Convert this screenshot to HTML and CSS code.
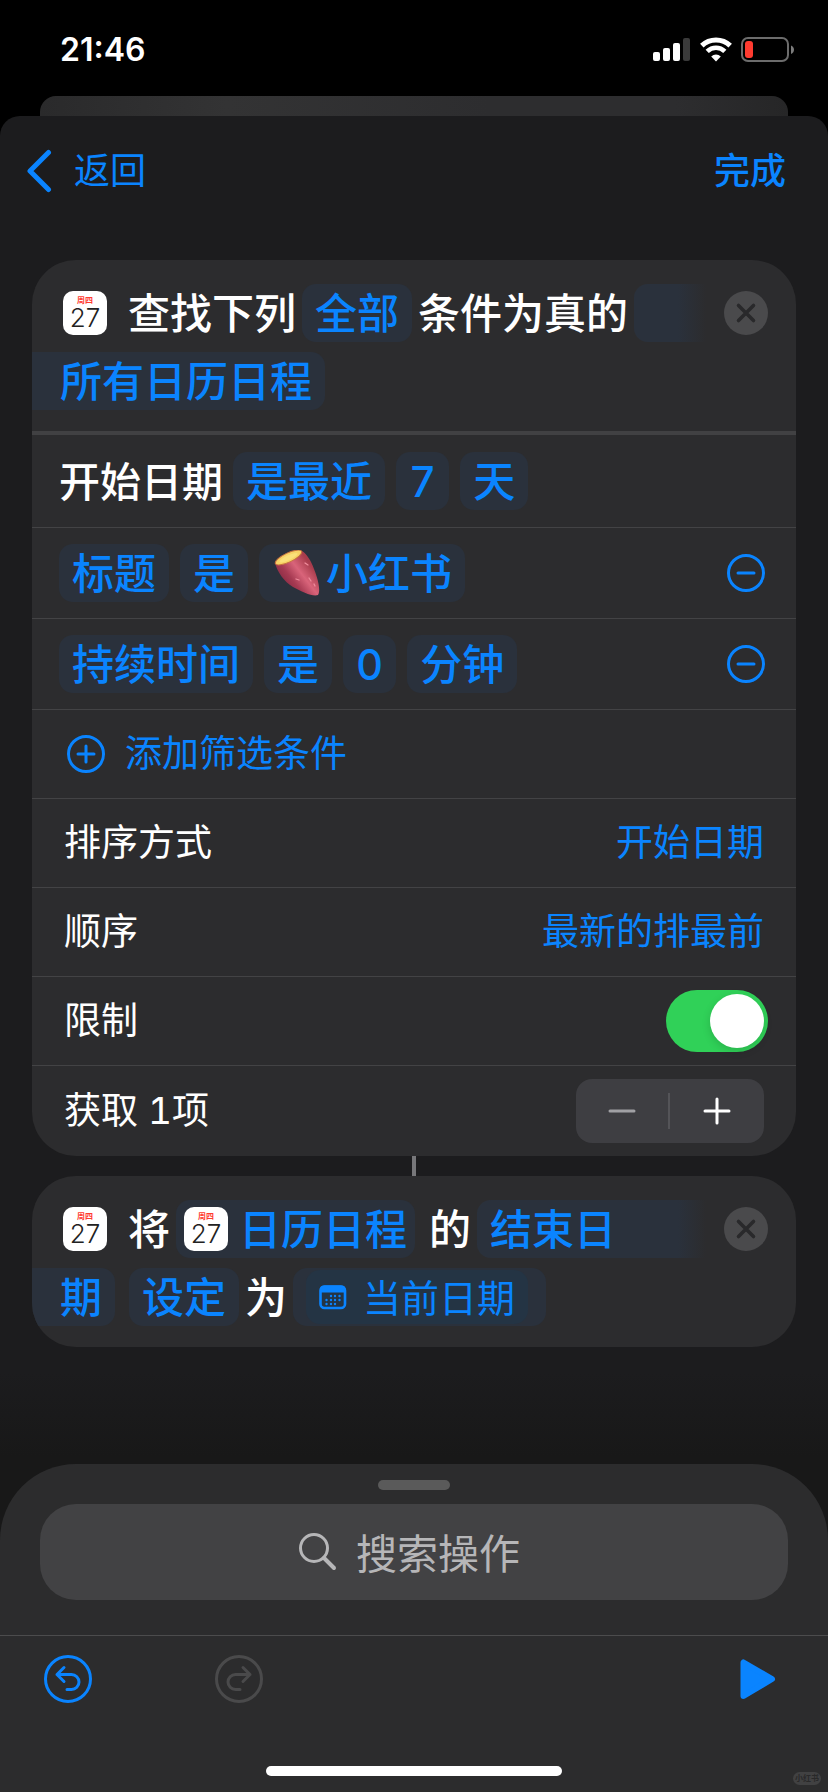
FILE: index.html
```html
<!DOCTYPE html>
<html lang="zh-CN">
<head>
<meta charset="utf-8">
<meta name="viewport" content="width=device-width, initial-scale=1">
<title>快捷指令</title>
<link rel="stylesheet" href="styles.css">
</head>
<body>
<header class="status">
  <time class="clock">21:46</time>
  <div class="indicators">
    <svg width="38" height="26" viewBox="0 0 38 26" fill="#fff" aria-hidden="true">
      <rect x="0" y="15" width="7" height="9" rx="2"/><rect x="10" y="11" width="7" height="13" rx="2"/><rect x="20" y="6" width="7" height="18" rx="2"/><rect x="30" y="1" width="7" height="23" rx="2" fill="#3a3a3a"/>
    </svg>
    <svg width="32" height="26" viewBox="0 0 32 26" fill="none" stroke="#fff" aria-hidden="true">
      <path d="M1.8 8.6A20.5 20.5 0 0 1 30.2 8.6" stroke-width="5"/>
      <path d="M7.2 14.4A12.6 12.6 0 0 1 24.8 14.4" stroke-width="4.6"/>
      <path d="M16 24.4L11.2 19.4A7 7 0 0 1 20.8 19.4Z" fill="#fff" stroke="none"/>
    </svg>
    <svg width="54" height="26" viewBox="0 0 54 26" aria-hidden="true">
      <rect x="1" y="1" width="46" height="23" rx="6" fill="none" stroke="#6c6c6c" stroke-width="2"/>
      <rect x="4" y="4" width="8" height="17" rx="3" fill="#ff3b30"/>
      <path d="M50 8.5C54 10 54 15.500 50 17Z" fill="#7c7c7c"/>
    </svg>
  </div>
</header>
<div class="behind"></div>
<div class="sheet">
  <nav class="nav">
    <button class="nav-back">
      <svg width="26" height="44" viewBox="0 0 26 44" fill="none" stroke="currentColor" stroke-width="5" stroke-linecap="round" stroke-linejoin="round" aria-hidden="true"><path d="M22.500 3.500L4 22L22.500 40.500"/></svg>
      返回
    </button>
    <button class="nav-done">完成</button>
  </nav>

  <main class="flow">
    <section class="card">
      <div class="head">
        <div class="line">
          <span class="cal"><span class="cal-week">周四</span><span class="cal-day">27</span></span>
          <span class="word lead">查找下列</span>
          <button class="chip">全部</button>
          <span class="word">条件为真的</span>
          <span class="chip chip-open"></span>
          <button class="close" aria-label="移除"><svg width="44" height="44" viewBox="0 0 44 44" aria-hidden="true"><circle cx="22" cy="22" r="22" fill="#4a4a4c"/><path d="M14.500 14.500L29.500 29.500M29.500 14.500L14.500 29.500" stroke="#29292b" stroke-width="3.600" stroke-linecap="round"/></svg></button>
        </div>
        <div class="line">
          <button class="chip chip-cont">所有日历日程</button>
        </div>
      </div>
      <div class="row row-first">
        <span class="subject">开始日期</span>
        <div class="chips"><button class="chip">是最近</button><button class="chip">7</button><button class="chip">天</button></div>
      </div>
      <div class="row">
        <div class="chips"><button class="chip">标题</button><button class="chip">是</button><button class="chip">
          <svg width="54" height="48" viewBox="0 0 54 48" role="img" aria-label="红薯">
            <defs>
              <linearGradient id="skin" x1="0.15" y1="0.8" x2="0.8" y2="0.3"><stop offset="0" stop-color="#7f2740"/><stop offset="0.35" stop-color="#a63a52"/><stop offset="0.65" stop-color="#d9647a"/><stop offset="1" stop-color="#a83c4c"/></linearGradient>
            </defs>
            <path d="M3 13C5 21 12 32 21 37C30 42 41 47 46 45C49 41 46 29 42 19C39 11 35 4 30 1Z" fill="url(#skin)"/>
            <ellipse cx="16.500" cy="7.500" rx="14.500" ry="4.600" transform="rotate(-25 16.500 7.500)" fill="#f7d366" stroke="#c4703f" stroke-width="1"/>
            <ellipse cx="16.500" cy="7.800" rx="10" ry="2.400" transform="rotate(-25 16.500 7.800)" fill="#fae07a"/>
            <path d="M33 13l3 2M37 28l2 3M42 34l1 2M24 29l3 1" stroke="#f08c9c" stroke-width="1.300" stroke-linecap="round"/>
          </svg>小红书</button></div>
        <button class="minus" aria-label="删除条件"><svg width="38" height="38" viewBox="0 0 38 38" fill="none" stroke="currentColor" stroke-width="3" stroke-linecap="round" aria-hidden="true"><circle cx="19" cy="19" r="17.500"/><path d="M11 19H27"/></svg></button>
      </div>
      <div class="row">
        <div class="chips"><button class="chip">持续时间</button><button class="chip">是</button><button class="chip">0</button><button class="chip">分钟</button></div>
        <button class="minus" aria-label="删除条件"><svg width="38" height="38" viewBox="0 0 38 38" fill="none" stroke="currentColor" stroke-width="3" stroke-linecap="round" aria-hidden="true"><circle cx="19" cy="19" r="17.500"/><path d="M11 19H27"/></svg></button>
      </div>
      <div class="row option">
        <button class="add">
          <svg width="38" height="38" viewBox="0 0 38 38" fill="none" stroke="currentColor" stroke-width="3" stroke-linecap="round" aria-hidden="true"><circle cx="19" cy="19" r="17.500"/><path d="M11 19H27M19 11V27"/></svg>
          添加筛选条件
        </button>
      </div>
      <div class="row option"><span>排序方式</span><button class="value">开始日期</button></div>
      <div class="row option"><span>顺序</span><button class="value">最新的排最前</button></div>
      <div class="row option option-switch"><label for="limit">限制</label><input class="switch" id="limit" type="checkbox" role="switch" checked></div>
      <div class="row option option-last">
        <span>获取 1项</span>
        <div class="stepper">
          <button class="step step-off" aria-label="减少"><svg width="28" height="28" viewBox="0 0 28 28" stroke="currentColor" stroke-width="3" stroke-linecap="round" aria-hidden="true"><path d="M2 14H26"/></svg></button>
          <button class="step" aria-label="增加"><svg width="28" height="28" viewBox="0 0 28 28" stroke="currentColor" stroke-width="3" stroke-linecap="round" aria-hidden="true"><path d="M2 14H26M14 2V26"/></svg></button>
        </div>
      </div>
    </section>

    <div class="link"></div>

    <section class="card">
      <div class="head">
        <div class="line">
          <span class="cal"><span class="cal-week">周四</span><span class="cal-day">27</span></span>
          <span class="word lead">将</span>
          <button class="chip chip-cal"><span class="cal"><span class="cal-week">周四</span><span class="cal-day">27</span></span><span class="word">日历日程</span></button>
          <span class="word joint">的</span>
          <button class="chip chip-open">结束日</button>
          <button class="close" aria-label="移除"><svg width="44" height="44" viewBox="0 0 44 44" aria-hidden="true"><circle cx="22" cy="22" r="22" fill="#4a4a4c"/><path d="M14.500 14.500L29.500 29.500M29.500 14.500L14.500 29.500" stroke="#29292b" stroke-width="3.600" stroke-linecap="round"/></svg></button>
        </div>
        <div class="line">
          <button class="chip chip-cont">期</button>
          <button class="chip chip-set">设定</button>
          <span class="word">为</span>
          <button class="chip chip-token"><span class="token">
            <svg width="28" height="26" viewBox="0 0 28 26" aria-hidden="true"><rect x="1.500" y="2.500" width="24.500" height="21.500" rx="4" fill="none" stroke="currentColor" stroke-width="2.600"/><path d="M1 8V5.500Q1 1.500 5 1.500H22.500Q26.500 1.500 26.500 5.500V8.500H1Z" fill="currentColor"/><g fill="currentColor"><circle cx="12" cy="12" r="1.200"/><circle cx="16" cy="12" r="1.200"/><circle cx="20.500" cy="12" r="1.200"/><circle cx="7.500" cy="16" r="1.200"/><circle cx="12" cy="16" r="1.200"/><circle cx="16" cy="16" r="1.200"/><circle cx="20.500" cy="16" r="1.200"/><circle cx="7.500" cy="20" r="1.200"/><circle cx="12" cy="20" r="1.200"/><circle cx="16" cy="20" r="1.200"/></g></svg>
            <span class="word">当前日期</span></span></button>
        </div>
      </div>
    </section>
  </main>

  <footer class="drawer">
    <div class="grabber"></div>
    <label class="search">
      <svg width="40" height="40" viewBox="0 0 40 40" fill="none" stroke="currentColor" aria-hidden="true"><circle cx="16" cy="16" r="13.500" stroke-width="3"/><path d="M26 26L36 36" stroke-width="4" stroke-linecap="round"/></svg>
      <input class="search-box" type="text" placeholder="搜索操作" aria-label="搜索操作">
    </label>
    <div class="tools">
      <button class="tool" aria-label="撤销"><svg width="48" height="48" viewBox="0 0 48 48" fill="none" stroke="currentColor" stroke-width="3" stroke-linecap="round" stroke-linejoin="round" aria-hidden="true"><circle cx="24" cy="24" r="22.500"/><path d="M20 12.500L13 19.500L20 26.500M13 19.500H27.500A7.500 7.500 0 0 1 27.500 34.500H23"/></svg></button>
      <button class="tool tool-off" aria-label="重做"><svg width="48" height="48" viewBox="0 0 48 48" fill="none" stroke="currentColor" stroke-width="3" stroke-linecap="round" stroke-linejoin="round" aria-hidden="true"><circle cx="24" cy="24" r="22.500"/><path d="M28 12.500L35 19.500L28 26.500M35 19.500H20.500A7.500 7.500 0 0 0 20.500 34.500H25"/></svg></button>
      <button class="tool tool-play" aria-label="运行"><svg width="36" height="42" viewBox="0 0 36 42" fill="currentColor" stroke="currentColor" stroke-width="6" stroke-linejoin="round" aria-hidden="true"><path d="M3.500 4.500V38L32 21Z"/></svg></button>
    </div>
    <div class="home"></div>
    <span class="mark">小红书</span>
  </footer>
</div>
</body>
</html>
```
FILE: styles.css
```css
* {
  box-sizing: border-box;
}

body {
  margin: 0;
  min-height: 100vh;
  display: flex;
  flex-direction: column;
  background: #000;
  color: #fff;
  font-family: Inter, "Noto Sans CJK SC", sans-serif;
  font-size: 37px;
  line-height: 44px;
  font-variant-numeric: tabular-nums;
}

button {
  margin: 0;
  padding: 0;
  border: 0;
  background: none;
  color: #0a84ff;
  font: inherit;
  white-space: nowrap;
}

svg {
  display: block;
  flex: none;
}

/* status bar */
.status {
  display: flex;
  justify-content: space-between;
  align-items: center;
  height: 96px;
  padding: 4px 33px 0 60px;
}

.clock {
  font-size: 32px;
  font-weight: 600;
  font-variant-numeric: normal;
}

.indicators {
  display: flex;
  gap: 9px;
}

/* sheets */
.behind {
  height: 20px;
  margin: 0 40px;
  border-radius: 16px 16px 0 0;
  background: linear-gradient(90deg, #2a2a2b, #333334 25%, #2d2d2f 60%, #2d2d2f 85%, #262627);
}

.sheet {
  flex: 1;
  display: flex;
  flex-direction: column;
  border-radius: 20px 20px 0 0;
  background: linear-gradient(#1c1c1e, #1c1c1e 75%, #181818 80%);
}

.nav {
  display: flex;
  justify-content: space-between;
  align-items: center;
  padding: 33px 42px 0 26px;
  font-size: 36px;
}

.nav-back {
  display: flex;
  align-items: center;
  gap: 22px;
}

.nav-done {
  font-weight: 500;
}

.flow {
  flex: 1;
  padding: 67px 32px 24px;
}

/* cards */
.card {
  overflow: hidden;
  border-radius: 44px;
  background: #2c2c2e;
}

.head {
  display: flex;
  flex-direction: column;
  gap: 10px;
  padding: 24px 28px 21px 0;
  font-size: 42px;
  font-weight: 500;
  line-height: 56px;
}

.line {
  display: flex;
  align-items: center;
  gap: 6px;
  white-space: nowrap;
}

.line > .cal {
  margin-left: 31px;
}

.word {
  padding-top: 2px;
}

.lead {
  margin-left: 15px;
}

.cal {
  flex: none;
  display: flex;
  flex-direction: column;
  align-items: center;
  width: 44px;
  height: 44px;
  padding-top: 4px;
  border-radius: 10px;
  background: #fff;
  color: #222;
  font-variant-numeric: normal;
}

.cal-week {
  color: #ff3b30;
  font-size: 8px;
  font-weight: 700;
  line-height: 10px;
}

.cal-day {
  font-size: 26px;
  font-weight: 300;
  line-height: 26px;
}

.chip {
  display: flex;
  align-items: center;
  height: 58px;
  padding: 2px 13px 0;
  border-radius: 14px;
  background: #2a313c;
  font-size: 42px;
  font-weight: 500;
}

.chip-open {
  flex: 1;
  border-radius: 14px 0 0 14px;
  background: linear-gradient(90deg, #2a313c calc(100% - 28px), #2c2c2e);
}

.chip-cont {
  padding-left: 28px;
  border-radius: 0 14px 14px 0;
}

.chip-cal {
  gap: 11px;
  padding: 0 8px;
}

.chip-set,
.joint {
  margin-left: 8px;
}

.chip-token {
  padding: 0 18px 0 13px;
}

.token {
  display: flex;
  align-items: center;
  gap: 16px;
  height: 54px;
  padding: 0 13px;
  border-radius: 14px;
  background: #243444;
  font-size: 38px;
  font-weight: 400;
}

.line .close {
  margin-left: 12px;
}

.row {
  display: flex;
  align-items: center;
  justify-content: space-between;
  min-height: 91px;
  padding: 0 31px 0 27px;
  border-top: 1px solid #434345;
}

.row-first {
  justify-content: flex-start;
  gap: 10px;
  min-height: 96px;
  border-top: 4px solid #414143;
}

.subject {
  padding-top: 2px;
  font-size: 41px;
  font-weight: 500;
}

.chips {
  display: flex;
  gap: 11px;
}

.option {
  min-height: 89px;
  padding: 0 32px;
}

.option-switch {
  padding-right: 28px;
}

.option-last {
  min-height: 91px;
}

.add {
  display: flex;
  align-items: center;
  gap: 20px;
  margin-left: 3px;
}

.switch {
  appearance: none;
  width: 102px;
  height: 62px;
  margin: 0;
  padding: 4px;
  border-radius: 31px;
  background: #30d158;
  display: flex;
  justify-content: flex-end;
}

.switch::before {
  content: "";
  width: 54px;
  height: 54px;
  border-radius: 50%;
  background: #fff;
  box-shadow: 0 3px 8px rgba(0, 0, 0, 0.15);
}

.stepper {
  display: flex;
  align-items: center;
  padding: 14px 0;
  border-radius: 16px;
  background: #3e3e42;
}

.step {
  display: flex;
  align-items: center;
  justify-content: center;
  width: 94px;
  height: 36px;
  color: #fff;
}

.step-off {
  border-right: 2px solid #545458;
  color: #a0a0a4;
}

.link {
  width: 4px;
  height: 20px;
  margin: 0 auto;
  background: #77777a;
}

/* bottom drawer */
.drawer {
  position: relative;
  padding: 16px 0;
  border-radius: 76px 76px 0 0;
  background: #2c2c2d;
}

.grabber {
  width: 72px;
  height: 10px;
  margin: 0 auto 14px;
  border-radius: 5px;
  background: #5a5a5a;
}

.search {
  display: flex;
  align-items: center;
  justify-content: center;
  gap: 18px;
  height: 96px;
  margin: 0 40px 35px;
  border-radius: 36px;
  background: #424244;
  color: #b6b6b8;
}

.search-box {
  width: 174px;
  padding: 3px 0 0;
  border: 0;
  outline: 0;
  background: none;
  color: #fff;
  font: inherit;
  font-size: 41px;
  line-height: 58px;
}

.search-box::placeholder {
  color: #b6b6b8;
  opacity: 1;
}

.tools {
  display: flex;
  align-items: center;
  gap: 123px;
  padding: 19px 52px 63px 44px;
  border-top: 1px solid #4c4c4d;
}

.tool-off {
  color: #4a4a4b;
}

.tool-play {
  margin-left: auto;
}

.home {
  width: 296px;
  height: 10px;
  margin: 0 auto;
  border-radius: 5px;
  background: #fff;
}

.mark {
  position: absolute;
  right: 7px;
  bottom: 7px;
  padding: 0 2px;
  border-radius: 7px;
  background: #414142;
  color: #29292a;
  font-size: 8px;
  font-weight: 700;
  line-height: 13px;
}
```
